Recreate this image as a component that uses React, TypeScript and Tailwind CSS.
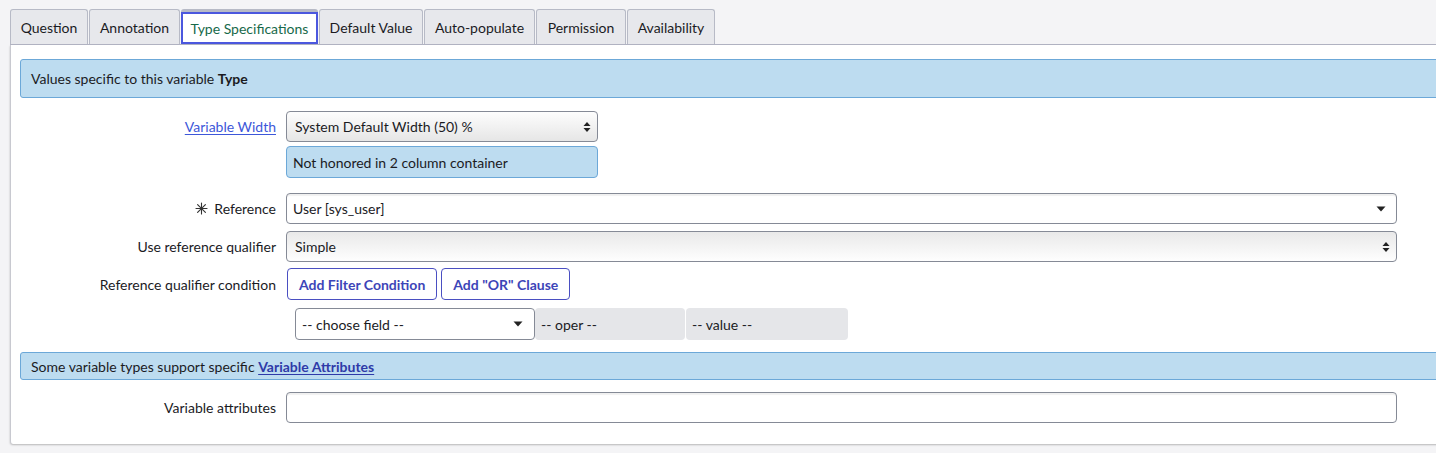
import React from 'react';

const tabs = [
  { label: 'Question', w: 'w-[78px]' },
  { label: 'Annotation', w: 'w-[91px]' },
  { label: 'Type Specifications', w: 'w-[137px]', active: true },
  { label: 'Default Value', w: 'w-[104px]' },
  { label: 'Auto-populate', w: 'w-[111px]' },
  { label: 'Permission', w: 'w-[90px]' },
  { label: 'Availability', w: 'w-[88px]' },
];

function UpDown() {
  return (
    <svg width="8" height="12" viewBox="0 0 8 12" className="shrink-0">
      <path d="M4 1 L7.5 5 H0.5 Z" fill="#222" />
      <path d="M4 11 L7.5 7 H0.5 Z" fill="#222" />
    </svg>
  );
}

function Down() {
  return (
    <svg width="10" height="6" viewBox="0 0 10 6" className="shrink-0">
      <path d="M0.5 0.5 H9.5 L5 5.5 Z" fill="#222" />
    </svg>
  );
}

function Mandatory() {
  return (
    <svg width="13" height="13" viewBox="0 0 13 13" className="shrink-0">
      <g stroke="#333" strokeWidth="1.1" strokeLinecap="round">
        <path d="M6.5 1 V12" />
        <path d="M1 6.5 H12" />
        <path d="M2.6 2.6 L10.4 10.4" />
        <path d="M10.4 2.6 L2.6 10.4" />
      </g>
    </svg>
  );
}

function Row({ label, children, className = '' }: { label: React.ReactNode; children: React.ReactNode; className?: string }) {
  return (
    <div className={`flex items-center ${className}`}>
      <div className="w-[266px] shrink-0 pr-[10px] text-right">{label}</div>
      <div className="flex-1 min-w-0">{children}</div>
    </div>
  );
}

export default function App() {
  return (
    <div
      className="w-[1436px] h-[453px] overflow-hidden bg-[#f4f4f6] text-[14px] text-[#1b1b1f] pt-[10px] pl-[10px]"
      style={{ fontFamily: 'Lato, "Open Sans", sans-serif' }}
    >
      {/* tabs */}
      <div className="flex items-end h-[35px] border-b border-[#b3b5c4] w-[1440px]">
        {tabs.map((t) =>
          t.active ? (
            <div
              key={t.label}
              className={`${t.w} h-[35px] mr-px rounded-t-[3px] border-t-[3px] border-t-[#b7bac6] bg-white flex`}
            >
              <div className="flex-1 border-2 border-[#4b57de] flex items-center justify-center text-[#17694a]">
                {t.label}
              </div>
            </div>
          ) : (
            <div
              key={t.label}
              className={`${t.w} h-[35px] mr-px rounded-t-[3px] border border-b-0 border-[#b7bac6] bg-[#e7e8ec] flex items-center justify-center`}
            >
              {t.label}
            </div>
          )
        )}
      </div>

      {/* panel */}
      <div className="w-[1440px] h-[399px] bg-white border-l border-[#c8c9d0] rounded-bl-[3px] shadow-[0_1px_2px_rgba(0,0,0,0.25)] pl-[9px] pt-[14px]">
        <div className="h-[39px] bg-[#bddcf0] border border-[#6ca8d8] rounded-l-[3px] flex items-center pl-[10px]">
          Values specific to this variable&nbsp;<b>Type</b>
        </div>

        <div className="flex flex-col">
          <Row label={<a className="text-[#3d57d9] underline underline-offset-2">Variable Width</a>} className="mt-[13px]">
            <div className="w-[312px] h-[31px] rounded-[4px] border border-[#858a96] bg-gradient-to-b from-[#fdfdfd] to-[#e6e6e6] flex items-center justify-between pl-[8px] pr-[6px]">
              <span>System Default Width (50) %</span>
              <UpDown />
            </div>
          </Row>
          <Row label="" className="mt-[4px]">
            <div className="w-[312px] h-[32px] rounded-[4px] border border-[#6ca8d8] bg-[#bddcf0] flex items-center pl-[6px]">
              Not honored in 2 column container
            </div>
          </Row>

          <Row
            label={
              <span className="inline-flex items-center gap-[6px]">
                <Mandatory />
                Reference
              </span>
            }
            className="mt-[15px]"
          >
            <div className="w-[1111px] h-[31px] rounded-[4px] border border-[#858a96] bg-white shadow-[inset_0_2px_1px_rgba(0,0,0,0.06)] flex items-center justify-between pl-[6px] pr-[10px]">
              <span>User [sys_user]</span>
              <Down />
            </div>
          </Row>

          <Row label="Use reference qualifier" className="mt-[7px]">
            <div className="w-[1111px] h-[31px] rounded-[4px] border border-[#858a96] bg-gradient-to-b from-[#e9e9e9] to-[#fefefe] flex items-center justify-between pl-[8px] pr-[6px]">
              <span>Simple</span>
              <UpDown />
            </div>
          </Row>

          <Row label="Reference qualifier condition" className="mt-[6px]">
            <div className="flex gap-[4px] pl-px">
              <button className="h-[32px] px-[11px] rounded-[4px] border border-[#4a4fc2] bg-white text-[14px] font-bold text-[#3d45b8]">
                Add Filter Condition
              </button>
              <button className="h-[32px] px-[11px] rounded-[4px] border border-[#4a4fc2] bg-white text-[14px] font-bold text-[#3d45b8]">
                Add &quot;OR&quot; Clause
              </button>
            </div>
          </Row>

          <Row label="" className="mt-[8px]">
            <div className="flex pl-[9px]">
              <div className="w-[240px] h-[32px] rounded-[4px] border border-[#858a96] bg-white flex items-center justify-between pl-[6px] pr-[11px]">
                <span>-- choose field --</span>
                <Down />
              </div>
              <div className="w-[150px] h-[32px] rounded-[4px] bg-[#e5e6e9] flex items-center pl-[6px]">-- oper --</div>
              <div className="w-[162px] h-[32px] ml-px rounded-[4px] bg-[#e5e6e9] flex items-center pl-[6px]">-- value --</div>
            </div>
          </Row>
        </div>

        <div className="mt-[12px] h-[28px] bg-[#bddcf0] border border-[#6ca8d8] rounded-l-[3px] flex items-center pl-[10px]">
          Some variable types support specific&nbsp;
          <a className="font-bold text-[14px] text-[#2e3aa8] underline underline-offset-2">Variable Attributes</a>
        </div>

        <Row label="Variable attributes" className="mt-[12px]">
          <div className="w-[1111px] h-[31px] rounded-[4px] border border-[#858a96] bg-white shadow-[inset_0_2px_1px_rgba(0,0,0,0.06)]" />
        </Row>
      </div>
    </div>
  );
}
